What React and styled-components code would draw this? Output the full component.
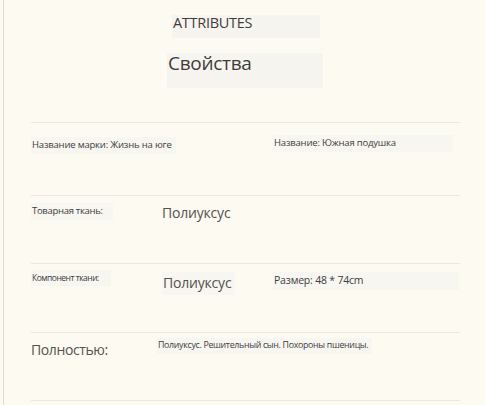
import React from "react"
import styled, { createGlobalStyle } from "styled-components"

const GlobalStyle = createGlobalStyle`
  html, body {
    margin: 0;
    padding: 0;
    background: #fdfaf2;
  }
  body {
    font-family: "Open Sans", "Noto Sans", sans-serif;
    color: #4a4846;
  }
`

const Page = styled.div`
  width: 481px;
  min-height: 405px;
  margin-left: 3px;
  border-left: 1px solid #dedbd2;
  background: #fdfaf2;
  box-sizing: border-box;
  overflow: hidden;
`

const Header = styled.header`
  display: flex;
  flex-direction: column;
  align-items: flex-start;
  padding: 15px 0 0 159px;
  height: 122px;
  box-sizing: border-box;
`

const Chip = styled.div`
  background: #f6f4ef;
  box-sizing: border-box;
  width: ${({ $w }) => $w}px;
  height: ${({ $h }) => $h}px;
  margin-left: ${({ $ml }) => $ml || 0}px;
  margin-top: ${({ $mt }) => $mt || 0}px;
  padding: 1px 0 0 1px;
  font-size: ${({ $size }) => $size}px;
  line-height: 1;
  letter-spacing: ${({ $ls }) => $ls || 0}px;
  color: #3f3d3b;
  white-space: nowrap;
`

const Table = styled.div`
  margin: 0 24px 0 27px;
  border-top: 1px solid #ece8de;
`

const Row = styled.div`
  display: grid;
  grid-template-columns: 131px 111px 1fr;
  align-items: start;
  height: ${({ $h }) => $h}px;
  border-bottom: 1px solid #ece8de;
  box-sizing: border-box;
`

const Cell = styled.div`
  grid-column: ${({ $span }) => $span || "auto"};
  margin-top: ${({ $top }) => $top}px;
  margin-left: ${({ $left }) => $left || 0}px;
  font-size: ${({ $size }) => $size}px;
  line-height: 1.3;
  letter-spacing: ${({ $ls }) => $ls ?? -0.2}px;
  color: ${({ $dim }) => ($dim ? "#55524e" : "#3f3d3b")};
  white-space: nowrap;
`

const Shade = styled.span`
  display: inline-block;
  background: #f8f6f0;
  padding: 2px ${({ $pr }) => $pr || 6}px 3px 1px;
  width: ${({ $w }) => ($w ? `${$w}px` : "auto")};
  box-sizing: border-box;
`

export default function App() {
  return (
    <>
      <GlobalStyle />
      <Page>
        <Header>
          <Chip $w={148} $h={23} $ml={9} $size={14.5} $ls={-0.3}>
            ATTRIBUTES
          </Chip>
          <Chip $w={156} $h={35} $ml={4} $mt={15} $size={19} $ls={-0.3}>
            Свойства
          </Chip>
        </Header>

        <Table>
          <Row $h={73}>
            <Cell $span="1 / 3" $top={14} $size={9.5}>
              <Shade $pr={4}>Название марки: Жизнь на юге</Shade>
            </Cell>
            <Cell $top={12} $size={9.5}>
              <Shade $w={180}>Название: Южная подушка</Shade>
            </Cell>
          </Row>

          <Row $h={68}>
            <Cell $top={7} $size={9.5} $ls={-0.3}>
              <Shade $pr={10}>Товарная ткань:</Shade>
            </Cell>
            <Cell $top={7.5} $size={14} $dim>
              Полиуксус
            </Cell>
          </Row>

          <Row $h={69}>
            <Cell $top={6} $size={8.5} $ls={-0.5}>
              <Shade $pr={12}>Компонент ткани:</Shade>
            </Cell>
            <Cell $top={7.5} $size={14} $dim>
              <Shade $pr={4}>Полиуксус</Shade>
            </Cell>
            <Cell $top={7.5} $size={10.5}>
              <Shade $w={186}>Размер: 48 * 74cm</Shade>
            </Cell>
          </Row>

          <Row $h={68}>
            <Cell $top={7.5} $size={14} $dim $ls={-0.4}>
              Полностью:
            </Cell>
            <Cell $span="2 / 4" $top={5} $left={-5} $size={8.8} $ls={-0.3}>
              <Shade $pr={4}>Полиуксус. Решительный сын. Похороны пшеницы.</Shade>
            </Cell>
          </Row>
        </Table>
      </Page>
    </>
  )
}
